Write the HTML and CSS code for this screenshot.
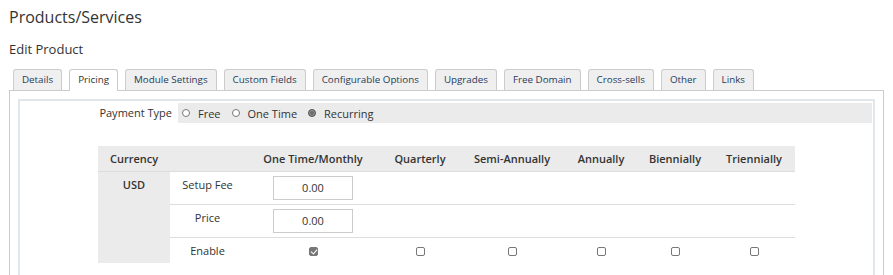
FILE: index.html
```html
<!DOCTYPE html>
<html lang="en">
<head>
  <meta charset="UTF-8">
  <title>Edit Product</title>
  <link rel="stylesheet" href="styles.css">
</head>
<body>
  <h1>Products/Services</h1>
  <h2>Edit Product</h2>
  <ul class="tabs">
    <li><a href="#">Details</a></li>
    <li class="active"><a href="#">Pricing</a></li>
    <li><a href="#">Module Settings</a></li>
    <li><a href="#">Custom Fields</a></li>
    <li><a href="#">Configurable Options</a></li>
    <li><a href="#">Upgrades</a></li>
    <li><a href="#">Free Domain</a></li>
    <li><a href="#">Cross-sells</a></li>
    <li><a href="#">Other</a></li>
    <li><a href="#">Links</a></li>
  </ul>
  <div class="tab-pane">
    <div class="form-box">
      <div class="field-row">
        <div class="field-label">Payment Type</div>
        <div class="field-input">
          <label><span class="radio"></span>Free</label>
          <label><span class="radio"></span>One Time</label>
          <label><span class="radio checked"></span>Recurring</label>
        </div>
      </div>
      <table class="pricing">
        <colgroup>
          <col style="width:72px"><col style="width:75px"><col style="width:136px"><col style="width:78px">
          <col style="width:106px"><col style="width:72px"><col style="width:76px"><col style="width:82px">
        </colgroup>
        <thead>
          <tr>
            <th>Currency</th><th></th><th>One Time/Monthly</th><th>Quarterly</th>
            <th>Semi-Annually</th><th>Annually</th><th>Biennially</th><th>Triennially</th>
          </tr>
        </thead>
        <tbody>
          <tr>
            <td class="currency" rowspan="3">USD</td>
            <td class="label">Setup Fee</td>
            <td><input class="price" type="text" value="0.00"></td>
            <td></td><td></td><td></td><td></td><td></td>
          </tr>
          <tr>
            <td class="label">Price</td>
            <td><input class="price" type="text" value="0.00"></td>
            <td></td><td></td><td></td><td></td><td></td>
          </tr>
          <tr class="enable">
            <td class="label">Enable</td>
            <td><span class="check checked"></span></td>
            <td><span class="check"></span></td>
            <td><span class="check"></span></td>
            <td><span class="check"></span></td>
            <td><span class="check"></span></td>
            <td><span class="check"></span></td>
          </tr>
        </tbody>
      </table>
    </div>
  </div>
</body>
</html>
```

FILE: styles.css
```css
* { box-sizing: border-box; }
html, body { margin:0; padding:0; }
body { font-family: 'Open Sans', 'Noto Sans', sans-serif; color:#333; background:#fff; padding:0 9px; font-size:11px; }
h1 { font-size:16px; font-weight:400; margin:0; padding-top:6px; line-height:22px; }
h2 { font-size:13px; font-weight:400; margin:0; padding-top:12px; line-height:18px; }
/* Tabs */
.tabs { list-style:none; margin:11px 0 0 4px; padding:0; display:flex; gap:7px; height:21px; font-size:9.8px; }
.tabs li { border:1px solid #ccc; border-bottom:none; border-radius:3px 3px 0 0; background:#efefef; }
.tabs a { display:block; padding:0 8px; line-height:20px; color:#1f3b5a; text-decoration:none; }
.tabs li.active { background:#fff; height:22px; position:relative; z-index:1; }
.tabs li.active a { color:#333; }
.tab-pane { border:1px solid #ccc; padding:8px 8px 0; min-height:190px; }
.form-box { border:2px solid #e1e6ea; border-bottom:none; padding:2px 1px 0; min-height:180px; }
/* Payment type */
.field-row { display:flex; height:20px; }
.field-label { width:157px; text-align:right; padding-right:6px; line-height:20px; }
.field-input { flex:1; background:#ebebeb; display:flex; align-items:center; gap:11px; padding-left:4px; }
.field-input label { display:flex; align-items:center; gap:8px; }
.radio { width:8px; height:8px; border:1px solid #777; border-radius:50%; background:#fff; }
.radio.checked { background:#6b6b6b; border-color:#555; box-shadow:inset 0 0 0 1px #999; }
/* Pricing table */
.pricing { table-layout:fixed; border-collapse:collapse; margin:23px auto 0; width:697px; }
.pricing th { background:#ebebeb; font-weight:600; height:25px; padding:0; text-align:center; border-bottom:1px solid #ddd; }
.pricing td { text-align:center; border-top:1px solid #ddd; padding:0; height:33px; vertical-align:top; }
.pricing td.label { padding-top:5px; }
.pricing td.currency { background:#ebebeb; font-weight:600; border-top:none; padding-top:5px; }
.price { width:80px; height:24px; border:1px solid #ccc; margin-top:4px; text-align:center; font:inherit; color:#333; }
.pricing tr.enable td { height:26px; vertical-align:middle; }
.pricing tr.enable td.label { padding-top:0; }
.check { display:inline-block; width:9px; height:9px; border:1px solid #777; border-radius:2px; background:#fff; vertical-align:middle; }
.check.checked { background:#777; position:relative; }
.check.checked::after { content:''; position:absolute; left:2px; top:0; width:3px; height:5px; border:solid #fff; border-width:0 1px 1px 0; transform:rotate(40deg); }
```
